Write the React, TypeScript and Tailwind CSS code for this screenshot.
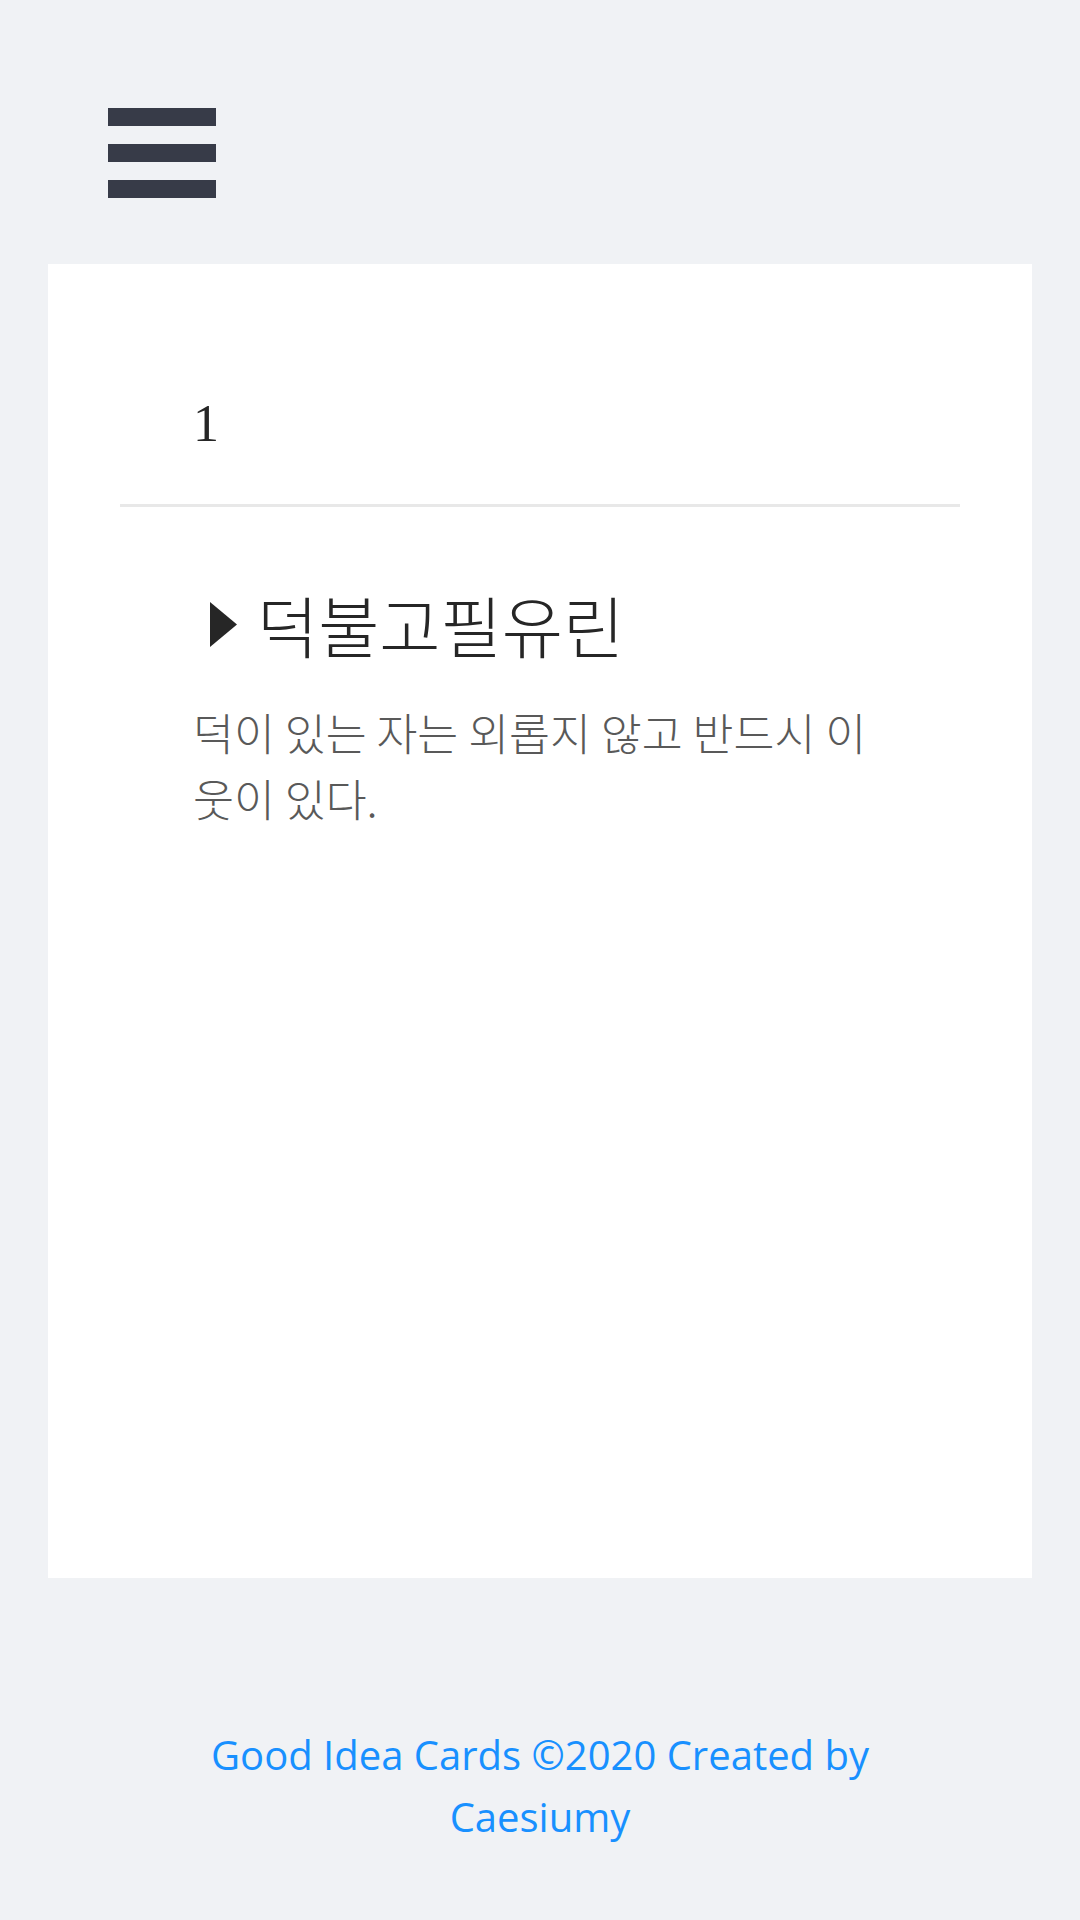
export default function App() {
  return (
    <div className="min-h-screen w-[1080px] bg-[#f0f2f5] flex flex-col" style={{ minHeight: 1920 }}>
      {/* Header */}
      <header className="pt-[108px] pl-[108px] pb-[66px]">
        <button className="flex flex-col gap-[18px] w-[108px]" aria-label="menu">
          <span className="block h-[18px] w-[108px] bg-[#373b48]" />
          <span className="block h-[18px] w-[108px] bg-[#373b48]" />
          <span className="block h-[18px] w-[108px] bg-[#373b48]" />
        </button>
      </header>

      {/* Card */}
      <main className="mx-[48px] h-[1314px] bg-white px-[72px]">
        <div className="h-[243px] border-b-[3px] border-[#e8e8e8] pt-[134px] pl-[73px]">
          <span className="block text-[#262626] text-[52px] leading-none font-['Liberation_Serif',serif]">1</span>
        </div>

        <div className="pt-[70px] pl-[73px] pr-[73px] font-['Noto_Sans_CJK_KR',sans-serif]">
          <h2 className="flex items-center text-[66.5px] leading-[95px] text-[#262626] font-light">
            <svg width="27" height="45" viewBox="0 0 27 45" className="ml-[17px] mr-[20px] shrink-0">
              <path d="M0 0 L27 22.5 L0 45 Z" fill="#262626" />
            </svg>
            <span>덕불고필유린</span>
          </h2>
          <p className="mt-[27px] text-[44.5px] leading-[66px] text-[#595959] font-light">
            덕이 있는 자는 외롭지 않고 반드시 이웃이 있다.
          </p>
        </div>
      </main>

      {/* Footer */}
      <footer className="mt-auto pt-[146px] pb-[78px] px-[150px] text-center text-[#1890ff] text-[40px] leading-[62px] font-['Open_Sans',sans-serif]">
        Good Idea Cards ©2020 Created by Caesiumy
      </footer>
    </div>
  )
}
